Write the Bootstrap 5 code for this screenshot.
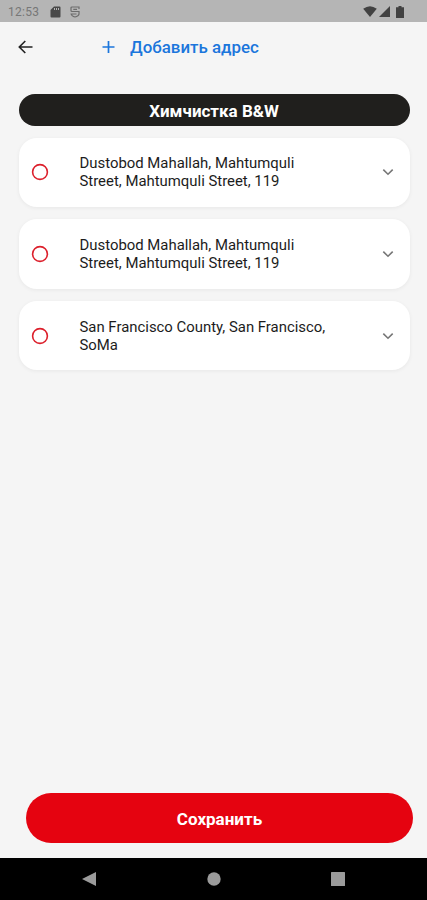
<!DOCTYPE html>
<html lang="ru">
<head>
<meta charset="utf-8">
<meta name="viewport" content="width=device-width, initial-scale=1">
<title>Химчистка B&amp;W</title>
<link href="https://cdn.jsdelivr.net/npm/bootstrap@5.3.0/dist/css/bootstrap.min.css" rel="stylesheet">
<style>
body{font-family:Roboto,sans-serif;background:#f5f5f5;height:900px;overflow:hidden}
svg{display:block;flex-shrink:0}
.status-bar{height:22px;background:#b5b5b5;color:#777;font-size:12px;letter-spacing:.25px;padding:1px 23px 0 8px}
.icon-storage{margin-left:11px}
.icon-app{margin-left:9px}
.icon-signal{margin-left:2px}
.icon-battery{margin-left:6px}
.top-bar{height:50px;padding-left:17px}
.add-link{color:#1b76dc;font-size:16.9px;font-weight:500;margin-left:67px;gap:14px;padding-top:1px}
.page-main{padding:22px 17.5px 0 18.5px}
.service-title{height:31.5px;background:#201f1d;font-size:17px;font-weight:700;margin-bottom:12px;padding-top:2px}
.address-card{height:69.5px;border-radius:18px;margin-bottom:12.2px;padding:0 15px 0 12px;box-shadow:0 1px 4px rgba(0,0,0,.06)}
.address-text{font-size:14.9px;line-height:18px;color:#1c1c1c;margin-left:31px;width:262px}
.save-wrap{padding:0 14px 15px 26px}
.save-btn,.save-btn:hover{height:50px;background:#e50310;color:#fff;font-size:17px;font-weight:700;padding:8px 0 5px}
.system-nav{height:42px;padding:0 82px 0 82px;background:#000}
</style>
<script src="https://cdn.jsdelivr.net/npm/bootstrap@5.3.0/dist/js/bootstrap.bundle.min.js" defer></script>
</head>
<body class="d-flex flex-column m-0">
<div class="status-bar d-flex align-items-center">
  <span>12:53</span>
  <svg class="icon-storage" width="11" height="12" viewBox="0 0 11 12"><path fill="#494949" fill-rule="evenodd" d="M4 .5h5.5q1 0 1 1v9q0 1-1 1h-8q-1 0-1-1V4zM4 2v2h1V2zm2 0v2h1V2zm2 0v2h1V2z"/></svg>
  <svg class="icon-app" width="10" height="12" viewBox="0 0 10 12" fill="none" stroke="#6c6c6c" stroke-width="1.2"><path d="M9 3V1H2Q1 1 1 2v2.5q0 1 1 1h7v2.7Q8.5 10.3 5 11 1.500 10.300 1 7.500M3.300 3.300H7M1 8h5.500"/></svg>
  <div class="d-flex align-items-center ms-auto">
    <svg width="14" height="11" viewBox="0 0 14 11"><path fill="#424242" d="M.2 2.700Q7-2.300 13.800 2.700L7 11z"/></svg>
    <svg class="icon-signal" width="11" height="11" viewBox="0 0 11 11"><path fill="#424242" d="M0 11 11 0v11z"/></svg>
    <svg class="icon-battery" width="8" height="12" viewBox="0 0 8 12"><path fill="#424242" d="M2.500 0h3v1.300H8V12H0V1.300h2.500z"/></svg>
  </div>
</div>
<header class="top-bar d-flex align-items-center">
  <svg width="17" height="14" viewBox="0 0 17 14" fill="none" stroke="#222" stroke-width="1.6"><path d="M15.500 7H2.500M8.300 1 2.300 7l6 6"/></svg>
  <a href="#" class="add-link d-flex align-items-center text-decoration-none">
    <svg width="15" height="14" viewBox="0 0 15 14" stroke="#1b76dc" stroke-width="1.7"><path d="M1.500 7h12M7.500 1v12"/></svg>
    <span>Добавить адрес</span>
  </a>
</header>
<main class="page-main flex-grow-1">
  <h1 class="service-title rounded-pill text-white d-flex align-items-center justify-content-center">Химчистка B&amp;W</h1>
  <div class="address-card bg-white d-flex align-items-center">
    <svg width="18" height="18" viewBox="0 0 18 18"><circle cx="9" cy="9" r="7.400" fill="none" stroke="#dc1f2b" stroke-width="1.6"/></svg>
    <div class="address-text">Dustobod Mahallah, Mahtumquli<br>Street, Mahtumquli Street, 119</div>
    <svg class="ms-auto" width="14" height="10" viewBox="0 0 14 10" fill="none" stroke="#777" stroke-width="1.6"><path d="m2.300 2.600 4.700 4.600 4.700-4.600"/></svg>
  </div>
  <div class="address-card bg-white d-flex align-items-center">
    <svg width="18" height="18" viewBox="0 0 18 18"><circle cx="9" cy="9" r="7.400" fill="none" stroke="#dc1f2b" stroke-width="1.6"/></svg>
    <div class="address-text">Dustobod Mahallah, Mahtumquli<br>Street, Mahtumquli Street, 119</div>
    <svg class="ms-auto" width="14" height="10" viewBox="0 0 14 10" fill="none" stroke="#777" stroke-width="1.6"><path d="m2.300 2.600 4.700 4.600 4.700-4.600"/></svg>
  </div>
  <div class="address-card bg-white d-flex align-items-center">
    <svg width="18" height="18" viewBox="0 0 18 18"><circle cx="9" cy="9" r="7.400" fill="none" stroke="#dc1f2b" stroke-width="1.6"/></svg>
    <div class="address-text">San Francisco County, San Francisco,<br>SoMa</div>
    <svg class="ms-auto" width="14" height="10" viewBox="0 0 14 10" fill="none" stroke="#777" stroke-width="1.6"><path d="m2.300 2.600 4.700 4.600 4.700-4.600"/></svg>
  </div>
</main>
<div class="save-wrap">
  <button type="button" class="save-btn btn rounded-pill w-100 border-0">Сохранить</button>
</div>
<nav class="system-nav d-flex align-items-center justify-content-between">
  <svg width="14" height="14" viewBox="0 0 14 14"><path fill="#9b9b9b" d="M0 7 14 0v14z"/></svg>
  <svg width="14" height="14" viewBox="0 0 14 14"><circle cx="7" cy="7" r="6.700" fill="#9b9b9b"/></svg>
  <svg width="14" height="14" viewBox="0 0 14 14"><rect width="14" height="14" rx=".5" fill="#9b9b9b"/></svg>
</nav>
</body>
</html>
